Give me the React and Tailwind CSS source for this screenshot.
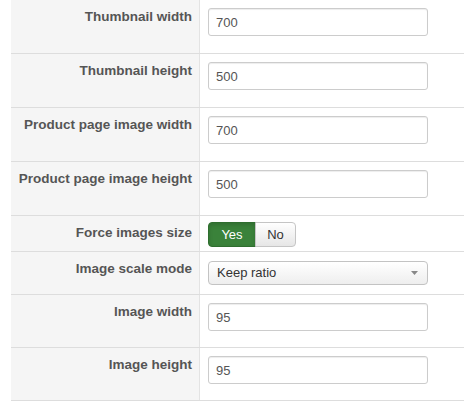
import React, { useState } from 'react';

const rows = [
  { label: 'Thumbnail width', type: 'text', value: '700', h: 'h-[54px]' },
  { label: 'Thumbnail height', type: 'text', value: '500', h: 'h-[54px]' },
  { label: 'Product page image width', type: 'text', value: '700', h: 'h-[54px]' },
  { label: 'Product page image height', type: 'text', value: '500', h: 'h-[54px]' },
  { label: 'Force images size', type: 'toggle', value: true, h: 'h-[36px]' },
  { label: 'Image scale mode', type: 'select', value: 'Keep ratio', h: 'h-[43px]' },
  { label: 'Image width', type: 'text', value: '95', h: 'h-[53px]' },
  { label: 'Image height', type: 'text', value: '95', h: 'h-[53px]' },
];

const TextField = ({ defaultValue }) => (
  <input
    type="text"
    defaultValue={defaultValue}
    className="mt-2 block h-[28px] w-[220px] rounded-[3px] border border-[#cccccc] bg-white px-[7px] text-[13px] text-[#555555] shadow-[inset_0_1px_1px_rgba(0,0,0,0.075)] outline-none"
  />
);

const YesNo = ({ initial }) => {
  const [on, setOn] = useState(initial);
  return (
    <div className="mt-[6px] flex h-[25px] text-[13px]">
      <button
        type="button"
        onClick={() => setOn(true)}
        className={`w-[48px] rounded-l-[4px] border ${
          on
            ? 'border-[#2f6e2f] bg-[#3a823a] text-white shadow-[inset_0_2px_4px_rgba(0,0,0,0.15)]'
            : 'border-[#c5c5c5] bg-gradient-to-b from-white to-[#e6e6e6] text-[#333333]'
        }`}
      >
        Yes
      </button>
      <button
        type="button"
        onClick={() => setOn(false)}
        className={`-ml-px w-[41px] rounded-r-[4px] border ${
          !on
            ? 'border-[#8a1f11] bg-[#bd362f] text-white'
            : 'border-[#c5c5c5] bg-gradient-to-b from-white to-[#e6e6e6] text-[#333333]'
        }`}
      >
        No
      </button>
    </div>
  );
};

const SelectField = ({ value }) => (
  <div className="mt-[9px] flex h-[24px] w-[220px] items-center justify-between rounded-[4px] border border-[#c3c3c3] bg-gradient-to-b from-white to-[#eeeeee] pl-[8px] pr-[9px] text-[13px] text-[#333333]">
    <span>{value}</span>
    <svg width="7" height="4" viewBox="0 0 7 4">
      <path d="M0 0h7L3.5 4z" fill="#888888" />
    </svg>
  </div>
);

export default function App() {
  return (
    <div className="h-[402px] w-[464px] overflow-hidden bg-white pl-[11px] font-['Liberation_Sans',Arial,sans-serif]">
      {rows.map((row) => (
        <div key={row.label} className={`flex border-b border-[#dddddd] ${row.h}`}>
          <div className="w-[189px] border-r border-[#e3e3e3] bg-[#f5f5f5] pr-[7px] pt-[8px] text-right text-[13.5px] font-bold leading-[18px] text-[#555555]">
            {row.label}
          </div>
          <div className="flex-1 pl-[8px]">
            {row.type === 'text' && <TextField defaultValue={row.value} />}
            {row.type === 'toggle' && <YesNo initial={row.value} />}
            {row.type === 'select' && <SelectField value={row.value} />}
          </div>
        </div>
      ))}
    </div>
  );
}
